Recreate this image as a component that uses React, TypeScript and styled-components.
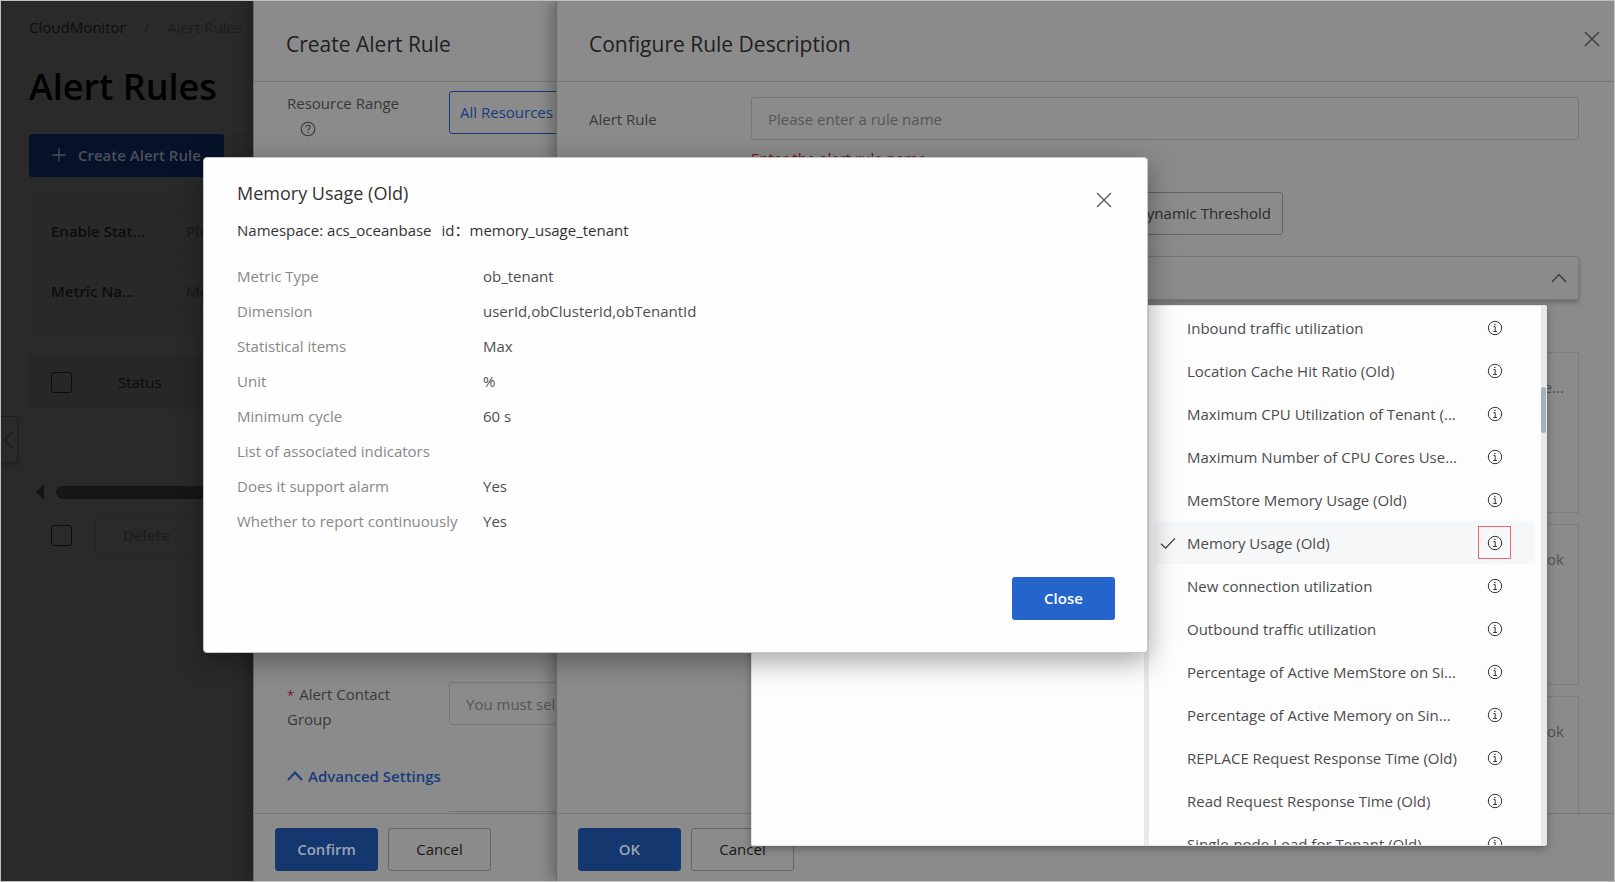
import React from "react";
import styled, { createGlobalStyle, css } from "styled-components";

const font = `"Open Sans", "Noto Sans", "Noto Sans CJK SC", sans-serif`;

const GlobalStyle = createGlobalStyle`
  *, *::before, *::after { box-sizing: border-box; }
  body { margin: 0; background: #2a2a2a; font-family: ${font}; font-size: 15px; line-height: 24px; }
  button, input { font: inherit; }
  h1, h2, h3, p, ul, dl, dd { margin: 0; padding: 0; }
  ul { list-style: none; }
`;

const Screen = styled.div`
  position: relative;
  height: 100vh;
  min-height: 820px;
  overflow: hidden;
  border: 1px solid #bfc1c0;
  background: #2a2a2a;
`;

/* ---------- Page behind the drawers ---------- */

const Page = styled.main`
  display: flex;
  flex-direction: column;
  padding: 14px 28px 0;
  color: #0c0c0c;
`;

const Breadcrumb = styled.nav`
  display: flex;
  gap: 18px;
  color: #1d1d1d;
`;

const CrumbLink = styled.a`
  color: #0e0e0e;
  text-decoration: none;
`;

const PageTitle = styled.h1`
  margin-top: 22px;
  font-size: 36px;
  line-height: 52px;
  font-weight: 600;
  color: #000;
`;

const PageActions = styled.div`
  display: flex;
  gap: 9px;
  margin-top: 21px;
`;

const CreateButton = styled.button`
  display: flex;
  align-items: center;
  gap: 12px;
  height: 43px;
  width: 195px;
  padding: 0 0 2px 23px;
  border: 0;
  border-radius: 3px;
  background: #061229;
  color: #4b505b;
  font-weight: 600;
  white-space: nowrap;
`;

const DimButton = styled.button`
  height: 43px;
  width: 103px;
  padding: 0 0 2px;
  border: 1px solid #252525;
  border-radius: 3px;
  background: transparent;
  color: #1d1d1d;
  font-weight: 600;
`;

const Filters = styled.form`
  display: flex;
  flex-direction: column;
  gap: 17px;
  margin-top: 12px;
  padding: 20px 22px 22px;
  background: #292929;
`;

const FilterRow = styled.label`
  display: grid;
  grid-template-columns: 118px 1fr;
  align-items: center;
  font-weight: 600;
`;

const FilterInput = styled.input`
  height: 43px;
  padding: 0 16px;
  border: 1px solid #252525;
  border-radius: 3px;
  background: transparent;
  &::placeholder { color: #1b1b1b; opacity: 1; }
`;

const RuleTable = styled.table`
  width: 100%;
  margin-top: 21px;
  border-collapse: collapse;
  background: #272727;
  th { height: 54px; padding: 0 0 0 22px; text-align: left; font-weight: 400; }
  th:first-child { width: 67px; }
`;

const Check = styled.input.attrs({ type: "checkbox" })`
  appearance: none;
  display: block;
  width: 21px;
  height: 21px;
  margin: 0;
  border: 1px solid #080d14;
  border-radius: 3px;
`;

const PageScroll = styled.div`
  display: flex;
  align-items: center;
  gap: 12px;
  margin-top: 75px;
  padding-left: 7px;
`;

const PageScrollBar = styled.div`
  flex: 1;
  height: 13px;
  border-radius: 7px;
  background: #161616;
`;

const BulkActions = styled.div`
  display: flex;
  align-items: center;
  gap: 23px;
  margin-top: 14px;
  padding-left: 22px;
`;

const CollapseTab = styled.button`
  position: absolute;
  left: 0;
  top: 415px;
  width: 17px;
  height: 47px;
  padding: 0 0 0 1px;
  border: 1px solid #1f1f1f;
  border-left: 0;
  border-radius: 0 3px 3px 0;
  background: #2a2a2a;
  color: #1b1b1b;
  box-shadow: 0 2px 4px rgba(0, 0, 0, 0.25);
  svg { display: block; }
`;

/* ---------- Drawers ---------- */

const Drawer = styled.aside<{ $left: number }>`
  position: absolute;
  top: 0;
  right: 0;
  bottom: 0;
  left: ${(p) => p.$left}px;
  display: flex;
  flex-direction: column;
  border-left: 1px solid #6a6a6a;
  background: #8b8b8b;
  color: #383838;
  box-shadow: -4px 0 14px rgba(0, 0, 0, 0.28);
`;

const DrawerHeader = styled.header`
  display: flex;
  align-items: center;
  justify-content: space-between;
  height: 81px;
  padding: 6px 14px 0 32px;
  border-bottom: 1px solid #767676;
`;

const DrawerTitle = styled.h2`
  font-size: 21px;
  line-height: 28px;
  font-weight: 400;
  color: #202020;
`;

const IconButton = styled.button`
  display: flex;
  padding: 0;
  border: 0;
  background: transparent;
  color: inherit;
`;

const DrawerClose = styled(IconButton)`
  margin-bottom: 10px;
`;

const DrawerFooter = styled.footer`
  display: flex;
  gap: 10px;
  height: 68px;
  padding: 14px 0 0 21px;
  border-top: 1px solid #767676;
`;

const FooterButton = styled.button<{ $primary?: boolean }>`
  width: 103px;
  height: 43px;
  padding: 0 0 2px;
  border: 1px solid #666;
  border-radius: 3px;
  background: transparent;
  color: #181818;
  ${(p) =>
    p.$primary &&
    css`
      border-color: #143770;
      background: #143770;
      color: #9ba4b2;
      font-weight: 600;
    `}
`;

const RangeBody = styled.div`
  flex: 1;
  min-height: 0;
  display: flex;
  flex-direction: column;
  justify-content: space-between;
  padding: 9px 0 0 33px;
`;

const Field = styled.div`
  display: grid;
  grid-template-columns: 162px minmax(0, 1fr);
  align-items: start;
`;

const HelpMark = styled.div`
  padding: 6px 0 0 13px;
  svg { display: block; }
`;

const RangeTab = styled.button`
  justify-self: start;
  height: 43px;
  padding: 0 10px 2px;
  border: 1px solid #143a7c;
  border-radius: 3px;
  background: transparent;
  color: #163c7d;
`;

const Required = styled.span`
  margin-right: 5px;
  font-size: 13px;
  color: #7c1414;
`;

const TextInput = styled.input`
  width: 100%;
  height: 43px;
  padding: 0 16px;
  border: 1px solid #777;
  border-radius: 3px;
  background: transparent;
  &::placeholder { color: #555; opacity: 1; }
`;

const Advanced = styled.button`
  display: flex;
  align-items: center;
  gap: 5px;
  margin: 33px 0 23px;
  padding: 0;
  border: 0;
  background: transparent;
  color: #163c7d;
  font-weight: 600;
  line-height: 24px;
`;

const NextFieldEdge = styled.div`
  height: 2px;
  margin-left: 162px;
  border-top: 1px solid #777;
`;

const RuleBody = styled.div`
  flex: 1;
  min-height: 0;
  display: flex;
  flex-direction: column;
  padding: 15px 35px 0 32px;
`;

const RuleLabel = styled.label`
  padding-top: 10px;
`;

const ErrorText = styled.p`
  margin-top: 6px;
  color: #7e0e18;
`;

const FieldStack = styled.div`
  display: flex;
  flex-direction: column;
`;

const ModeGroup = styled.div`
  display: flex;
  width: 532px;
  margin-top: 22px;
`;

const ModeButton = styled.button<{ $grow?: boolean }>`
  flex: ${(p) => (p.$grow ? "1" : "none")};
  min-width: 0;
  height: 43px;
  padding: 0 11px 2px;
  border: 1px solid #626262;
  border-radius: 3px;
  background: transparent;
  color: #2c2c2c;
  white-space: nowrap;
`;

const MetricSelect = styled.div`
  position: relative;
  z-index: 2;
  margin-top: 21px;
`;

const MetricTrigger = styled.button`
  display: flex;
  align-items: center;
  justify-content: flex-end;
  width: 100%;
  height: 44px;
  padding: 0 11px;
  border: 1px solid #777;
  border-radius: 3px;
  background: #8b8b8b;
  color: #3c3c3c;
  box-shadow: 0 3px 5px rgba(0, 0, 0, 0.22);
`;

const LevelCards = styled.div`
  flex: 1;
  min-height: 0;
  overflow: hidden;
  display: flex;
  flex-direction: column;
  gap: 11px;
  margin: 52px 0 0 162px;
`;

const LevelCard = styled.section`
  flex: none;
  height: 161px;
  padding: 22px 14px;
  border: 1px solid #7c7c7c;
  text-align: right;
  color: #505050;
`;

/* ---------- Metric menu ---------- */

const Menu = styled.div`
  position: absolute;
  top: 49px;
  left: 0;
  right: 32px;
  height: 541px;
  display: grid;
  grid-template-columns: minmax(0, 1fr) 397px;
  overflow: hidden;
  border: 1px solid #e2e4e6;
  border-radius: 2px;
  background: #fdfdfd;
  box-shadow: 0 3px 8px rgba(0, 0, 0, 0.3);
`;

const MenuPane = styled.div`
  display: flex;
  min-height: 0;
`;

const MenuTrack = styled.div`
  width: 5px;
  background: #e6eaed;
`;

const MenuThumb = styled.div`
  height: 46px;
  margin-top: 81px;
  border-radius: 3px;
  background: #a3b1bc;
`;

const CategoryArea = styled.div`
  flex: 1;
`;

const MetricList = styled.ul`
  flex: 1;
  min-width: 0;
  padding: 0 6px 0 5px;
`;

const MetricItem = styled.li<{ $selected?: boolean }>`
  display: grid;
  grid-template-columns: 27px 280px 1fr;
  align-items: center;
  height: 43px;
  padding-left: 6px;
  border-radius: 3px;
  background: ${(p) => (p.$selected ? "#f6f7f9" : "transparent")};
  color: #4c4c4c;
  svg { display: block; }
`;

const MetricName = styled.span`
  white-space: nowrap;
`;

const InfoButton = styled(IconButton)<{ $marked?: boolean }>`
  align-items: center;
  justify-content: center;
  width: 33px;
  height: 33px;
  margin-left: 11px;
  border: 1px solid ${(p) => (p.$marked ? "#f0646a" : "transparent")};
  color: #333;
`;

/* ---------- Metric details dialog ---------- */

const Dialog = styled.section`
  position: absolute;
  z-index: 5;
  top: 156px;
  left: 202px;
  right: 466px;
  display: flex;
  flex-direction: column;
  padding: 22px 32px 32px 33px;
  border: 1px solid #c4c8cd;
  border-radius: 4px;
  background: #fefefe;
  color: #333;
  box-shadow: 0 8px 28px rgba(0, 0, 0, 0.36);
`;

const DialogHeader = styled.header`
  display: flex;
  justify-content: space-between;
  align-items: flex-start;
`;

const DialogTitle = styled.h3`
  font-size: 18px;
  line-height: 26px;
  font-weight: 400;
`;

const DialogClose = styled(IconButton)`
  margin: 12px 3px 0 0;
  color: #555;
`;

const MetricId = styled.p`
  display: flex;
  gap: 10px;
  margin-top: 10px;
`;

const Details = styled.dl`
  display: grid;
  grid-template-columns: 246px 1fr;
  grid-auto-rows: 35px;
  align-items: center;
  margin-top: 16px;
`;

const Term = styled.dt`
  color: #888;
`;

const Value = styled.dd`
  color: #4f4f4f;
`;

const CloseButton = styled.button`
  align-self: flex-end;
  width: 103px;
  height: 43px;
  margin-top: 39px;
  padding: 0 0 2px;
  border: 0;
  border-radius: 3px;
  background: #2464cb;
  color: #fff;
  font-weight: 600;
`;

/* ---------- Icons ---------- */

const CloseIcon = () => (
  <svg width="16" height="16" viewBox="0 0 16 16" fill="none" stroke="currentColor" strokeWidth="1.3" aria-hidden="true">
    <path d="M1 1l14 14M15 1L1 15" />
  </svg>
);

const ChevronUp = ({ weight = 1.5 }: { weight?: number }) => (
  <svg width="16" height="16" viewBox="0 0 16 16" fill="none" stroke="currentColor" strokeWidth={weight} aria-hidden="true">
    <path d="M1 12l7-7.5 7 7.5" />
  </svg>
);

const PlusIcon = () => (
  <svg width="14" height="14" viewBox="0 0 14 14" fill="none" stroke="currentColor" strokeWidth="1.3" aria-hidden="true">
    <path d="M7 0.5v13M0.5 7h13" />
  </svg>
);

const InfoIcon = () => (
  <svg width="16" height="16" viewBox="0 0 16 16" fill="none" stroke="currentColor" strokeWidth="1" aria-hidden="true">
    <circle cx="8" cy="8" r="6.7" />
    <path d="M6.5 6.6H8.2V11.4M6.3 11.5h3.6" />
    <circle cx="7.9" cy="4.5" r="0.8" fill="currentColor" stroke="none" />
  </svg>
);

const HelpIcon = () => (
  <svg width="16" height="16" viewBox="0 0 16 16" fill="none" stroke="currentColor" strokeWidth="1.1" aria-hidden="true">
    <circle cx="8" cy="8" r="6.8" />
    <path d="M5.9 6.3c0-1.3 1-2 2.1-2s2.1.7 2.1 1.9c0 1.5-2.1 1.6-2.1 3.3" />
    <circle cx="8" cy="11.5" r="0.8" fill="currentColor" stroke="none" />
  </svg>
);

const CheckIcon = () => (
  <svg width="16" height="16" viewBox="0 0 16 16" fill="none" stroke="#333" strokeWidth="1.2" aria-hidden="true">
    <path d="M1 8.8l4.6 4.4L15 3.4" />
  </svg>
);

const metrics = [
  "Inbound traffic utilization",
  "Location Cache Hit Ratio (Old)",
  "Maximum CPU Utilization of Tenant (...",
  "Maximum Number of CPU Cores Use...",
  "MemStore Memory Usage (Old)",
  "Memory Usage (Old)",
  "New connection utilization",
  "Outbound traffic utilization",
  "Percentage of Active MemStore on Si...",
  "Percentage of Active Memory on Sin...",
  "REPLACE Request Response Time (Old)",
  "Read Request Response Time (Old)",
  "Single-node Load for Tenant (Old)",
];
const selectedMetric = "Memory Usage (Old)";

const details: [string, string][] = [
  ["Metric Type", "ob_tenant"],
  ["Dimension", "userId,obClusterId,obTenantId"],
  ["Statistical items", "Max"],
  ["Unit", "%"],
  ["Minimum cycle", "60 s"],
  ["List of associated indicators", ""],
  ["Does it support alarm", "Yes"],
  ["Whether to report continuously", "Yes"],
];

export default function App() {
  return (
    <>
      <GlobalStyle />
      <Screen>
        <Page>
          <Breadcrumb aria-label="Breadcrumb">
            <CrumbLink href="#monitor">CloudMonitor</CrumbLink>
            <span>/</span>
            <span>Alert Rules</span>
          </Breadcrumb>
          <PageTitle>Alert Rules</PageTitle>
          <PageActions>
            <CreateButton type="button">
              <PlusIcon />
              Create Alert Rule
            </CreateButton>
            <DimButton type="button" aria-label="More actions" />
          </PageActions>
          <Filters>
            <FilterRow>
              Enable Stat...
              <FilterInput placeholder="Please select" />
            </FilterRow>
            <FilterRow>
              Metric Na...
              <FilterInput placeholder="Metric name" />
            </FilterRow>
          </Filters>
          <RuleTable>
            <thead>
              <tr>
                <th>
                  <Check aria-label="Select all rules" />
                </th>
                <th>Status</th>
              </tr>
            </thead>
          </RuleTable>
          <PageScroll>
            <svg width="8" height="16" viewBox="0 0 8 16" fill="#141414" aria-hidden="true">
              <path d="M8 0v16L0 8z" />
            </svg>
            <PageScrollBar />
          </PageScroll>
          <BulkActions>
            <Check aria-label="Select rules on this page" />
            <DimButton type="button">Delete</DimButton>
          </BulkActions>
        </Page>
        <CollapseTab type="button" aria-label="Collapse menu">
          <svg width="12" height="18" viewBox="0 0 12 18" fill="none" stroke="currentColor" strokeWidth="1.6">
            <path d="M10 1.5L2 9l8 7.5" />
          </svg>
        </CollapseTab>

        <Drawer $left={252} aria-label="Create Alert Rule">
          <DrawerHeader>
            <DrawerTitle>Create Alert Rule</DrawerTitle>
          </DrawerHeader>
          <RangeBody>
            <Field>
              <div>
                Resource Range
                <HelpMark>
                  <HelpIcon />
                </HelpMark>
              </div>
              <RangeTab type="button">All Resources</RangeTab>
            </Field>
            <div>
              <Field>
                <label htmlFor="contact-group">
                  <Required>*</Required>Alert Contact
                  <br />
                  Group
                </label>
                <TextInput id="contact-group" placeholder="You must select a contact group" />
              </Field>
              <Advanced type="button">
                <ChevronUp weight={2} />
                Advanced Settings
              </Advanced>
              <NextFieldEdge />
            </div>
          </RangeBody>
          <DrawerFooter>
            <FooterButton type="button" $primary>
              Confirm
            </FooterButton>
            <FooterButton type="button">Cancel</FooterButton>
          </DrawerFooter>
        </Drawer>

        <Drawer $left={555} aria-label="Configure Rule Description">
          <DrawerHeader>
            <DrawerTitle>Configure Rule Description</DrawerTitle>
            <DrawerClose type="button" aria-label="Close drawer">
              <CloseIcon />
            </DrawerClose>
          </DrawerHeader>
          <RuleBody>
            <Field>
              <RuleLabel htmlFor="rule-name">Alert Rule</RuleLabel>
              <FieldStack>
                <TextInput id="rule-name" placeholder="Please enter a rule name" />
                <ErrorText>Enter the alert rule name.</ErrorText>
                <ModeGroup>
                  <ModeButton type="button" $grow>
                    Simple Metric
                  </ModeButton>
                  <ModeButton type="button" $grow>
                    Expression
                  </ModeButton>
                  <ModeButton type="button">Dynamic Threshold</ModeButton>
                </ModeGroup>
                <MetricSelect>
                  <MetricTrigger type="button" aria-label="Metric" aria-expanded="true">
                    <ChevronUp />
                  </MetricTrigger>
                  <Menu>
                    <MenuPane>
                      <CategoryArea />
                      <MenuTrack />
                    </MenuPane>
                    <MenuPane>
                      <MetricList>
                        {metrics.map((name) => (
                          <MetricItem key={name} $selected={name === selectedMetric}>
                            <span>{name === selectedMetric && <CheckIcon />}</span>
                            <MetricName>{name}</MetricName>
                            <InfoButton type="button" aria-label={`About ${name}`} $marked={name === selectedMetric}>
                              <InfoIcon />
                            </InfoButton>
                          </MetricItem>
                        ))}
                      </MetricList>
                      <MenuTrack>
                        <MenuThumb />
                      </MenuTrack>
                    </MenuPane>
                  </Menu>
                </MetricSelect>
              </FieldStack>
            </Field>
            <LevelCards>
              <LevelCard>e...</LevelCard>
              <LevelCard>Webhook</LevelCard>
              <LevelCard>Webhook</LevelCard>
            </LevelCards>
          </RuleBody>
          <DrawerFooter>
            <FooterButton type="button" $primary>
              OK
            </FooterButton>
            <FooterButton type="button">Cancel</FooterButton>
          </DrawerFooter>
        </Drawer>

        <Dialog role="dialog" aria-labelledby="metric-title">
          <DialogHeader>
            <DialogTitle id="metric-title">Memory Usage (Old)</DialogTitle>
            <DialogClose type="button" aria-label="Close dialog">
              <CloseIcon />
            </DialogClose>
          </DialogHeader>
          <MetricId>
            <span>Namespace: acs_oceanbase</span>
            <span>id：memory_usage_tenant</span>
          </MetricId>
          <Details>
            {details.map(([term, value]) => (
              <React.Fragment key={term}>
                <Term>{term}</Term>
                <Value>{value}</Value>
              </React.Fragment>
            ))}
          </Details>
          <CloseButton type="button">Close</CloseButton>
        </Dialog>
      </Screen>
    </>
  );
}
